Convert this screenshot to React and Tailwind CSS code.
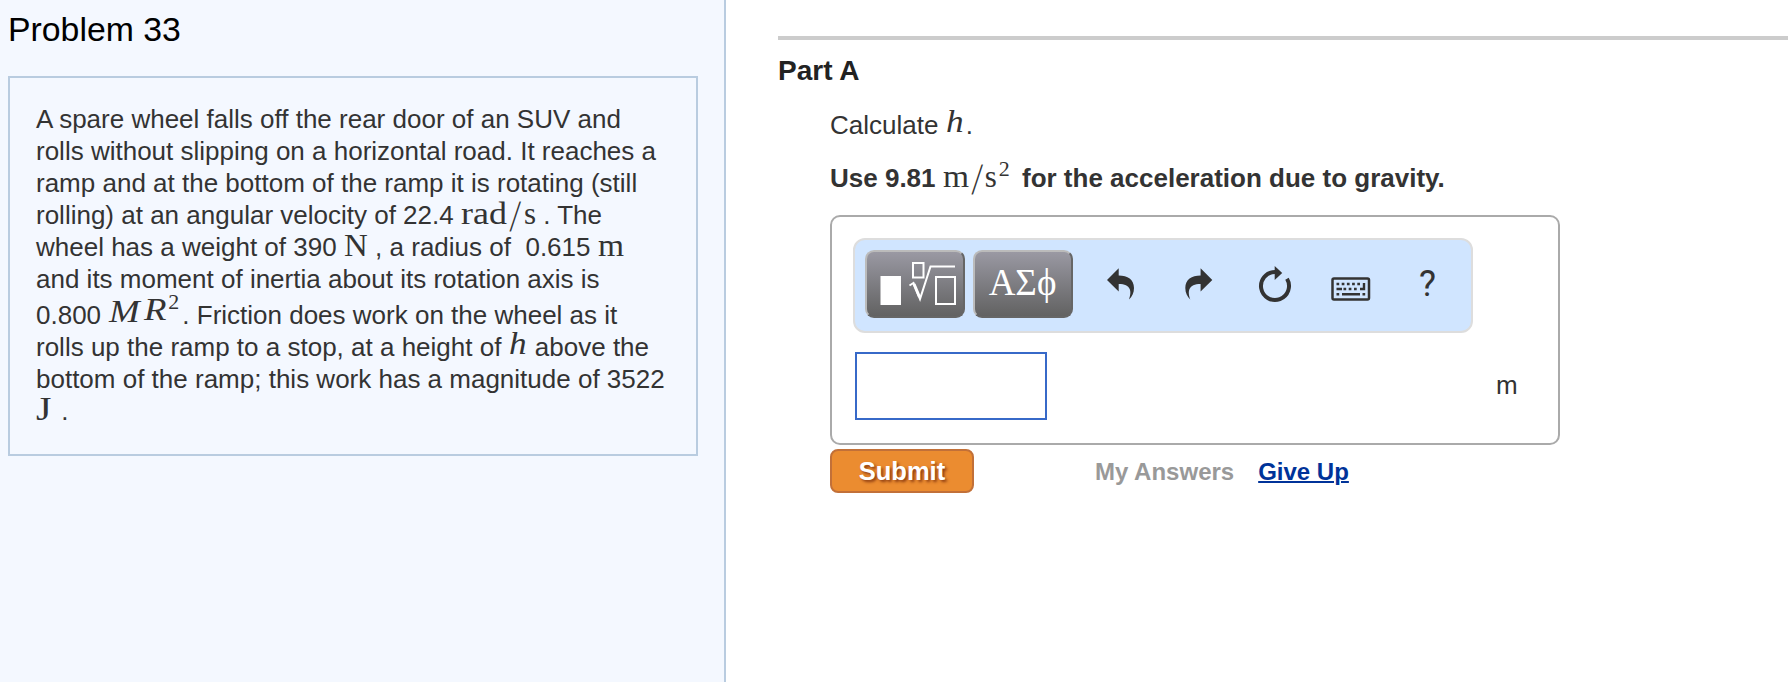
const SERIF = "font-['Liberation_Serif',serif]";

function Line({ children, tall = false }) {
  return (
    <div className={tall ? "h-9 pt-1 whitespace-pre leading-8" : "h-8 whitespace-pre leading-8"}>{children}</div>
  );
}

// A fixed-width slot for inline mathematics; zero leading keeps it from stretching its line.
function Sym({ box, glyph = "", children }) {
  return (
    <span className={`inline-block leading-[0] ${box}`}>
      <span className={`inline-block origin-left leading-[0] ${SERIF} ${glyph}`}>{children}</span>
    </span>
  );
}

function ProblemPanel() {
  return (
    <aside className="flex h-full w-[726px] shrink-0 flex-col border-r-2 border-[#b9cce0] bg-[#f4f8ff] pl-2">
      <h1 className="mt-[9px] h-10 text-[33.8px] leading-10 text-black">Problem 33</h1>
      <div className="mt-[27px] h-[380px] w-[690px] border-2 border-[#b9cce0] pt-[25px] pl-[26px] text-[26px] text-[#333]">
        <Line>A spare wheel falls off the rear door of an SUV and</Line>
        <Line>rolls without slipping on a horizontal road. It reaches a</Line>
        <Line>ramp and at the bottom of the ramp it is rotating (still</Line>
        <Line>
          rolling) at an angular velocity of 22.4{" "}
          <Sym box="w-[46px] text-[31px]" glyph="scale-x-[1.16]">rad</Sym>
          <Sym box="w-[17px] text-[31px]" glyph="scale-y-[1.45] -skew-x-[8deg] translate-x-[4px] translate-y-[2px]">/</Sym>
          <Sym box="w-[12px] text-[31px]">s</Sym> . The
        </Line>
        <Line>
          wheel has a weight of 390 <Sym box="w-[24px] text-[32px]" glyph="scale-x-[1.03]">N</Sym> , a radius of {" "}0.615{" "}
          <Sym box="w-[26px] text-[31px]" glyph="scale-x-[1.08]">m</Sym>
        </Line>
        <Line>and its moment of inertia about its rotation axis is</Line>
        <Line tall>
          0.800 <Sym box="ml-px w-[35px] align-[2px] text-[32px] italic" glyph="scale-x-[1.15]">M</Sym>
          <Sym box="w-[24px] align-[4px] text-[32px] italic" glyph="scale-x-[1.15]">R</Sym>
          <Sym box="w-[14px] align-[15px] text-[22px]">2</Sym>. Friction does work on the wheel as it
        </Line>
        <Line>
          rolls up the ramp to a stop, at a height of <Sym box="w-[19px] align-[2px] text-[32px] italic" glyph="scale-x-[1.1]">h</Sym> above the
        </Line>
        <Line>bottom of the ramp; this work has a magnitude of 3522</Line>
        <Line>
          <Sym box="w-[18px] text-[33px]" glyph="scale-x-[1.2]">J</Sym> .
        </Line>
      </div>
    </aside>
  );
}

const KEY =
  "flex h-[68px] w-[100px] items-center justify-center rounded-[9px] border-2 border-t-[#bbb] border-l-[#bbb] border-r-[#666] border-b-[#666] bg-linear-to-b from-[#9a99a3] to-[#626262]";

function TemplateIcon() {
  return (
    <svg className="ml-[6px] shrink-0" width="76" height="46" viewBox="0 0 76 46" fill="none" stroke="#fff" strokeWidth="2">
      <rect x="0.500" y="15" width="20.500" height="29" fill="#fff" stroke="none" />
      <rect x="33" y="2" width="10.500" height="14.500" />
      <path d="M29.500 24.500l4-2.500L40 38l10.500-32.500H75" />
      <path d="M34 23l5.500 13" strokeWidth="3" />
      <rect x="56" y="16" width="19" height="27" />
    </svg>
  );
}

function Toolbar() {
  return (
    <div className="flex h-[95px] w-[620px] rounded-xl border-2 border-[#ddd] bg-[#d0e5ff] pt-[10px] pl-[10px] text-[#333]">
      <button className={KEY}><TemplateIcon /></button>
      <button className={`${KEY} ml-2`}>
        <span className={`pb-1 pr-px whitespace-nowrap text-[37px] leading-none text-white ${SERIF}`}>ΑΣϕ</span>
      </button>
      <svg className="ml-[34px]" width="28" height="68" viewBox="1108 250 28 68" fill="#333">
        <path d="M1108 280l11.700-11.700v7.200c9 0 15.300 4 15.300 12.500c0 5-2 8.500-5 11.500c3-8 2-15.500-10.300-15.500v7.500z" />
      </svg>
      <svg className="ml-[50px]" width="28" height="68" viewBox="1185 250 28 68" fill="#333">
        <path d="M1212.300 280l-11.700-11.700v7.200c-9 0-15.300 4-15.300 12.500c0 5 2 8.500 5 11.500c-3-8-2-15.500 10.300-15.500v7.500z" />
      </svg>
      <svg className="ml-[45px]" width="34" height="68" viewBox="1258 250 34 68" fill="none" stroke="#333" strokeWidth="4">
        <path d="M1275 272a14 14 0 1 0 12 6.800" />
        <path d="M1274.700 266l7.500 7-7.500 7z" fill="#333" stroke="none" />
      </svg>
      <svg className="ml-[39px]" width="40" height="68" viewBox="1331 250 40 68" fill="none" stroke="#333">
        <rect x="1332.500" y="278.500" width="36.500" height="21" rx="1.500" strokeWidth="2.500" />
        <path d="M1336.500 284h24.500" strokeWidth="2.600" strokeDasharray="2.700 2.500" />
        <path d="M1336.500 289h5.500M1343.500 289h2.700M1348.700 289h2.700M1354 289h2.700M1336.500 294.300h2.700M1342 294.300h18M1362.500 294.300h2.700M1360 289h4v-6" strokeWidth="2.400" />
      </svg>
      <span className="ml-[48px] pt-[13px] font-['Roboto',sans-serif] text-[36px] leading-[42px]">?</span>
    </div>
  );
}

function PartA() {
  return (
    <main className="flex h-full grow flex-col pt-9 pl-[52px]">
      <div className="h-1 w-full bg-[#ccc]" />
      <h2 className="mt-[15px] h-8 text-[28px] font-bold leading-8 text-[#222]">Part A</h2>
      <div className="flex flex-col pl-[52px] text-[26px] text-[#333]">
        <p className="mt-[22px] h-8 whitespace-pre leading-8">
          Calculate <Sym box="w-[20px] align-[2px] text-[32px] italic" glyph="scale-x-[1.1]">h</Sym>.
        </p>
        <p className="mt-[21px] h-8 whitespace-pre font-bold leading-8">
          Use 9.81 <Sym box="w-[27px] text-[31px] font-normal" glyph="scale-x-[1.08]">m</Sym>
          <Sym box="w-[15px] text-[31px] font-normal" glyph="scale-y-[1.45] -skew-x-[8deg] translate-x-[3px] translate-y-[2px]">/</Sym>
          <Sym box="w-[14px] text-[31px] font-normal">s</Sym>
          <Sym box="w-[16px] align-[11px] text-[22px] font-normal">2</Sym> for the acceleration due to gravity.
        </p>
        <section className="mt-[21px] flex h-[230px] w-[730px] flex-col rounded-[10px] border-2 border-[#aaa] pt-[21px] pl-[21px]">
          <Toolbar />
          <div className="mt-[19px] flex items-center pl-[2px]">
            <input className="h-[68px] w-[192px] border-2 border-[#3769c8] bg-white outline-none" />
            <span className="ml-[449px] pb-0.5 leading-8">m</span>
          </div>
        </section>
        <div className="mt-1 flex h-11 items-center font-bold">
          <button className="h-11 w-[144px] rounded-lg border-2 border-[#c27038] bg-[#eb8c30] pt-px text-[25.500px] text-white [text-shadow:2px_2px_3px_#8a3a10]">
            Submit
          </button>
          <span className="ml-[121px] pt-0.5 whitespace-nowrap text-[24px] text-[#999]">My Answers</span>
          <a className="ml-6 pt-0.5 whitespace-nowrap text-[24px] text-[#039] underline decoration-2" href="#give-up">Give Up</a>
        </div>
      </div>
    </main>
  );
}

export default function App() {
  return (
    <div className="flex h-[682px] w-[1788px] overflow-hidden bg-white font-['Liberation_Sans',Arial,sans-serif]">
      <ProblemPanel />
      <PartA />
    </div>
  );
}
